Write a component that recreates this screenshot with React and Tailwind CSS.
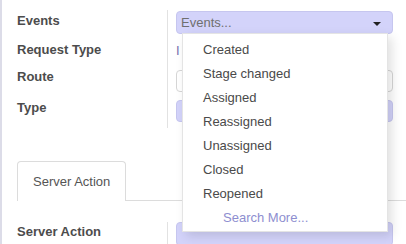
import React from "react";

const font = { fontFamily: '"Liberation Sans", Arial, sans-serif' };

export default function App() {
  const items = ["Created", "Stage changed", "Assigned", "Reassigned", "Unassigned", "Closed", "Reopened"];
  return (
    <div className="relative w-[406px] h-[244px] overflow-hidden bg-white border-l-2 border-[#dcdce8] text-[13px] text-[#4c4c4c]" style={font}>
      <div className="pt-[10px]">
        <div className="flex h-[26px]">
          <div className="w-[165px] pl-[15px] pt-[1px] font-bold">Events</div>
          <div className="flex-1 border-l border-[#e2e2e2] pl-[8px] pr-[13px]">
            <div className="h-[23px] mt-[1px] rounded-[4px] bg-[#d3d3fa] border border-[#c6c6ef] flex items-center justify-between pl-[4px] pr-[11px] text-[#6f6f6f]">
              <span>Events...</span>
              <span className="w-0 h-0 border-l-[4px] border-r-[4px] border-t-[4px] border-l-transparent border-r-transparent border-t-[#222] mt-[2px]"></span>
            </div>
          </div>
        </div>
        <div className="flex h-[28px]">
          <div className="w-[165px] pl-[15px] pt-[4px] font-bold">Request Type</div>
          <div className="flex-1 border-l border-[#e2e2e2] pl-[8px] pt-[5px] text-[#7a6fb0]">I</div>
        </div>
        <div className="flex h-[30px]">
          <div className="w-[165px] pl-[15px] pt-[3px] font-bold">Route</div>
          <div className="flex-1 border-l border-[#e2e2e2] pl-[8px] pr-[13px] pt-[6px]">
            <div className="h-[22px] rounded-[4px] bg-white border border-[#d6d6d6]"></div>
          </div>
        </div>
        <div className="flex h-[34px]">
          <div className="w-[165px] pl-[15px] pt-[4px] font-bold">Type</div>
          <div className="flex-1 border-l border-[#e2e2e2] pl-[8px] pr-[13px] pt-[6px]">
            <div className="h-[22px] rounded-[4px] bg-[#d3d3fa] border border-[#c6c6ef]"></div>
          </div>
        </div>
      </div>

      <div className="mt-[33px] flex h-[40px]">
        <div className="w-[15px] border-b border-transparent"></div>
        <div className="w-[109px] border border-b-0 border-[#dcdcdc] rounded-t-[4px] flex items-center pl-[15px] text-[#555]">Server Action</div>
        <div className="flex-1 border-b border-[#dcdcdc]"></div>
      </div>

      <div className="mt-[21px] flex h-[30px]">
        <div className="w-[165px] pl-[15px] pt-[2px] leading-[15px] font-bold">Server Action</div>
        <div className="flex-1 border-l border-[#e2e2e2] pl-[8px] pr-[13px]">
          <div className="h-[24px] rounded-[4px] bg-[#d3d3fa] border border-[#c6c6ef]"></div>
        </div>
      </div>

      <div className="absolute left-[180px] top-[33px] w-[206px] h-[199px] bg-white border border-[#e4e4e4] shadow-[4px_4px_10px_rgba(0,0,0,0.12)] pt-[4px]">
        {items.map((it) => (
          <div key={it} className="h-[24px] flex items-center pl-[20px] text-[#4a4a4a]">{it}</div>
        ))}
        <div className="h-[24px] flex items-center pl-[40px] text-[#8e8ed0]">Search More...</div>
      </div>
    </div>
  );
}
